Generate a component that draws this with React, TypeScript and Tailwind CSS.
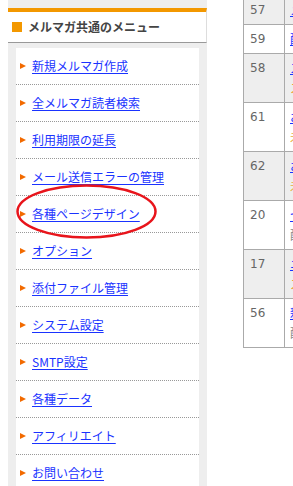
type Row = { id: number; title: string; sub?: string; subColor?: string };

const MENU = [
  '新規メルマガ作成',
  '全メルマガ読者検索',
  '利用期限の延長',
  'メール送信エラーの管理',
  '各種ページデザイン',
  'オプション',
  '添付ファイル管理',
  'システム設定',
  'SMTP設定',
  '各種データ',
  'アフィリエイト',
  'お問い合わせ',
];

const ROWS: Row[] = [
  { id: 57, title: 'メールマガジン' },
  { id: 59, title: '配信テスト' },
  { id: 58, title: 'ステップメール', sub: 'ステップ配信中', subColor: 'text-[#f0a030]' },
  { id: 61, title: 'お知らせ', sub: '未配信', subColor: 'text-[#e8b040]' },
  { id: 62, title: 'お知らせ2', sub: '未配信', subColor: 'text-[#e8b040]' },
  { id: 20, title: 'セミナー案内', sub: '配信済み', subColor: 'text-[#888]' },
  { id: 17, title: 'ニュース', sub: 'ステップ配信中', subColor: 'text-[#f0a030]' },
  { id: 56, title: '新着情報', sub: '配信済み', subColor: 'text-[#888]' },
];

function Sidebar() {
  return (
    <div className="w-[199px] shrink-0 bg-[#eeeeee] pt-2">
      <div className="flex h-[35px] items-center border-t-4 border-b border-r border-t-[#f39800] border-b-[#999] border-r-[#dddddd] bg-white">
        <span className="ml-1 h-2.5 w-2.5 bg-[#f39800]" />
        <span className="ml-1.5 text-[12px] font-bold text-[#444]">メルマガ共通のメニュー</span>
      </div>
      <div className="pt-[5px]">
        <ul className="mx-2 bg-white">
          {MENU.map((label) => (
            <li
              key={label}
              className="flex h-[37px] items-center border-b border-dotted border-[#999] pl-1 pb-px"
            >
              <span className="h-0 w-0 border-y-[3.5px] border-l-[6px] border-y-transparent border-l-[#f26a00]" />
              <a href="#" className="ml-1.5 text-[12px] leading-none text-[#1a33ff] underline underline-offset-2">
                {label}
              </a>
            </li>
          ))}
        </ul>
      </div>
    </div>
  );
}

function ListTable() {
  return (
    <table className="ml-[36px] -mt-[5px] w-[360px] shrink-0 border-collapse self-start border border-[#aaa] text-[12px] leading-5">
      <tbody>
        {ROWS.map((row, i) => (
          <tr key={row.id} className={i % 2 === 0 ? 'bg-[#eeeeee]' : 'bg-white'}>
            <td className="h-[29px] w-[41px] border border-[#aaa] px-1.5 py-1 align-top font-['DejaVu_Sans',sans-serif] text-[#666]">
              {row.id}
            </td>
            <td className="border border-[#aaa] px-[5px] py-1 align-top">
              <a href="#" className="text-[#1a33ff] underline">{row.title}</a>
              {row.sub && <div className={row.subColor}>{row.sub}</div>}
            </td>
          </tr>
        ))}
      </tbody>
    </table>
  );
}

export default function App() {
  return (
    <div className="relative flex h-[486px] w-[293px] overflow-hidden bg-white pl-2 font-['Noto_Sans_CJK_JP',sans-serif]">
      <Sidebar />
      <ListTable />
      <svg className="pointer-events-none absolute left-0 top-0" width="293" height="486">
        <ellipse cx="86.5" cy="211.5" rx="69" ry="26" fill="none" stroke="#e8141b" strokeWidth="2.5" />
      </svg>
    </div>
  );
}
